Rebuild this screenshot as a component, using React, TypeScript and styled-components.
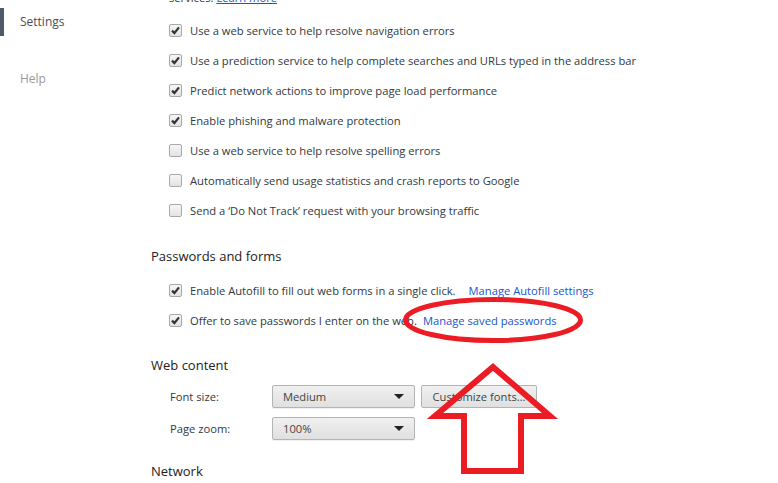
import styled, { createGlobalStyle } from 'styled-components'

const GlobalStyle = createGlobalStyle`
  html, body {
    margin: 0;
    padding: 0;
    background: #fff;
  }
  body {
    font-family: "Open Sans", "Noto Sans", "Liberation Sans", sans-serif;
    font-size: 11.2px;
    color: #303942;
    overflow: hidden;
  }
`

const Page = styled.div`
  position: relative;
  display: flex;
  width: 778px;
  height: 483px;
  overflow: hidden;
`

const Nav = styled.ul`
  list-style: none;
  margin: 0;
  padding: 8px 0 0;
  width: 151px;
  flex: none;
`

const NavItem = styled.li<{ $active?: boolean }>`
  height: 28px;
  line-height: 28px;
  padding-left: ${({ $active }) => ($active ? '16px' : '20px')};
  border-left: ${({ $active }) => ($active ? '4px solid #4e5a68' : 'none')};
  margin-bottom: 29px;
  font-size: 12px;
  color: ${({ $active }) => ($active ? '#464e5a' : '#999')};
`

const Main = styled.div`
  flex: 1;
  min-width: 0;
`

const Intro = styled.div`
  margin: -11px 0 8px 18px;
  height: 18px;
  line-height: 18px;

  a {
    color: #1a55cc;
    text-decoration: underline;
  }
`

const Heading = styled.h3<{ $top: number; $bottom?: number }>`
  margin: ${({ $top, $bottom = 4 }) => `${$top}px 0 ${$bottom}px`};
  height: 30px;
  line-height: 30px;
  font-size: 13px;
  font-weight: normal;
  color: #222;
`

const Row = styled.label`
  display: flex;
  align-items: center;
  height: 30px;
  padding-left: 18px;
  white-space: nowrap;
`

const Box = styled.span<{ $checked?: boolean }>`
  box-sizing: border-box;
  flex: none;
  width: 13px;
  height: 13px;
  margin-right: 8px;
  border: 1px solid #a9a9a9;
  border-radius: 2px;
  background: linear-gradient(#f6f6f6, #e3e3e3);
  display: flex;
  align-items: center;
  justify-content: center;

  svg {
    display: ${({ $checked }) => ($checked ? 'block' : 'none')};
  }
`

const Link = styled.a<{ $gap?: number }>`
  color: #1a55cc;
  text-decoration: none;
  margin-left: ${({ $gap = 6 }) => $gap}px;
`

const FieldRow = styled.div`
  display: flex;
  align-items: center;
  height: 32px;
  padding-left: 19px;
`

const FieldLabel = styled.span`
  width: 102px;
  flex: none;
`

const Select = styled.div`
  box-sizing: border-box;
  width: 143px;
  height: 23px;
  padding: 0 10px;
  display: flex;
  align-items: center;
  justify-content: space-between;
  border: 1px solid #b4b4b4;
  border-radius: 2px;
  background: linear-gradient(#f0f0f0, #e0e0e0);
  box-shadow: 0 1px 0 rgba(0, 0, 0, 0.06);
  color: #444;

  &::after {
    content: '';
    border-left: 5px solid transparent;
    border-right: 5px solid transparent;
    border-top: 5px solid #222;
  }
`

const Button = styled.div`
  box-sizing: border-box;
  margin-left: 6px;
  width: 116px;
  height: 23px;
  display: flex;
  align-items: center;
  justify-content: center;
  border: 1px solid #b4b4b4;
  border-radius: 2px;
  background: linear-gradient(#f0f0f0, #e0e0e0);
  color: #444;
`

const Markup = styled.svg`
  position: absolute;
  left: 0;
  top: 0;
  pointer-events: none;
`

const Check = () => (
  <svg width="9" height="9" viewBox="0 0 9 9">
    <path d="M1 4.6 L3.4 7 L8 1.4" fill="none" stroke="#333" strokeWidth="2.2" />
  </svg>
)

const privacy = [
  { text: 'Use a web service to help resolve navigation errors', checked: true },
  { text: 'Use a prediction service to help complete searches and URLs typed in the address bar', checked: true },
  { text: 'Predict network actions to improve page load performance', checked: true },
  { text: 'Enable phishing and malware protection', checked: true },
  { text: 'Use a web service to help resolve spelling errors', checked: false },
  { text: 'Automatically send usage statistics and crash reports to Google', checked: false },
  { text: 'Send a \u2018Do Not Track\u2019 request with your browsing traffic', checked: false },
]

export default function App() {
  return (
    <Page>
      <GlobalStyle />
      <Nav>
        <NavItem $active>Settings</NavItem>
        <NavItem>Help</NavItem>
      </Nav>
      <Main>
        <Intro>
          services. <a href="#">Learn more</a>
        </Intro>
        {privacy.map((p) => (
          <Row key={p.text}>
            <Box $checked={p.checked}>
              <Check />
            </Box>
            {p.text}
          </Row>
        ))}

        <Heading $top={16}>Passwords and forms</Heading>
        <Row>
          <Box $checked>
            <Check />
          </Box>
          Enable Autofill to fill out web forms in a single click.
          <Link href="#" $gap={13}>Manage Autofill settings</Link>
        </Row>
        <Row>
          <Box $checked>
            <Check />
          </Box>
          Offer to save passwords I enter on the web.
          <Link href="#">Manage saved passwords</Link>
        </Row>

        <Heading $top={15} $bottom={0}>Web content</Heading>
        <FieldRow>
          <FieldLabel>Font size:</FieldLabel>
          <Select>Medium</Select>
          <Button>Customize fonts...</Button>
        </FieldRow>
        <FieldRow>
          <FieldLabel>Page zoom:</FieldLabel>
          <Select>100%</Select>
        </FieldRow>

        <Heading $top={12}>Network</Heading>
      </Main>

      <Markup width="778" height="483" viewBox="0 0 778 483">
        <ellipse cx="493" cy="320" rx="87.5" ry="20.5" fill="none" stroke="#ec1c24" strokeWidth="5" />
        <polygon
          points="493,367 550,416 521,416 521,471 464,471 464,416 435,416"
          fill="none"
          stroke="#ec1c24"
          strokeWidth="6"
          strokeLinejoin="miter"
        />
      </Markup>
    </Page>
  )
}
